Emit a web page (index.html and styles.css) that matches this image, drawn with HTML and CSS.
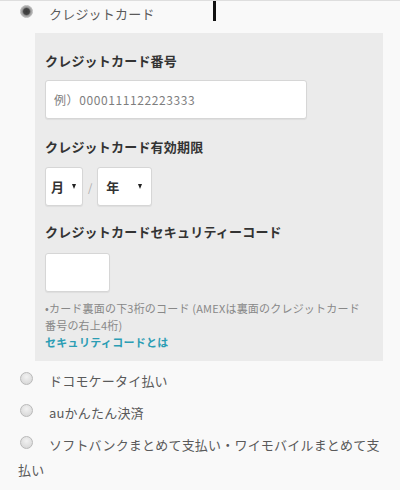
FILE: index.html
```html
<!DOCTYPE html>
<html lang="ja">
<head>
<meta charset="utf-8">
<link rel="stylesheet" href="styles.css">
</head>
<body>
<div class="page">
  <span class="caret"></span>
  <div class="option"><span class="radio checked"></span><span class="label">クレジットカード</span></div>
  <div class="card-box">
    <div class="field-title">クレジットカード番号</div>
    <div class="input wide"><span class="placeholder">例）0000111122223333</span></div>
    <div class="field-title gap">クレジットカード有効期限</div>
    <div class="expiry">
      <div class="select month"><span>月</span><span class="arrow"></span></div>
      <span class="slash">/</span>
      <div class="select year"><span>年</span><span class="arrow"></span></div>
    </div>
    <div class="field-title gap2">クレジットカードセキュリティーコード</div>
    <div class="input small"></div>
    <p class="note">•カード裏面の下3桁のコード (AMEXは裏面のクレジットカード番号の右上4桁)</p>
    <a class="link">セキュリティコードとは</a>
  </div>
  <div class="option"><span class="radio"></span><span class="label">ドコモケータイ払い</span></div>
  <div class="option"><span class="radio"></span><span class="label">auかんたん決済</span></div>
  <div class="option"><span class="radio"></span><span class="label">ソフトバンクまとめて支払い・ワイモバイルまとめて支払い</span></div>
</div>
</body>
</html>
```
FILE: styles.css
```css
html, body {
  margin: 0;
  padding: 0;
  background: #f9f9f9;
}
body {
  font-family: "Noto Sans CJK JP", "Noto Sans", sans-serif;
  color: #555;
}
.page {
  position: relative;
  width: 400px;
  height: 490px;
  border-top: 1px solid #dedede;
  box-sizing: border-box;
  padding: 0 14px 0 18px;
}
.caret {
  position: absolute;
  left: 213px;
  top: 0;
  width: 3px;
  height: 20px;
  background: #111;
}
.option {
  font-size: 13px;
  line-height: 25px;
  letter-spacing: 0.2px;
  color: #5a5a5a;
  margin-bottom: 7px;
}
.radio {
  display: inline-block;
  width: 11px;
  height: 11px;
  border-radius: 50%;
  border: 1px solid #b9b9b9;
  background: radial-gradient(circle at 50% 35%, #f2f2f2 0%, #d2d2d2 100%);
  margin: 0 16px 0 2px;
  vertical-align: 1px;
  box-sizing: content-box;
}
.radio.checked {
  background: radial-gradient(circle, #3a3a3a 0%, #454545 38%, #9a9a9a 55%, #d6d6d6 100%);
}
.card-box {
  margin: 0 0 7px 17px;
  width: 348px;
  box-sizing: border-box;
  background: #ebebeb;
  padding: 18px 10px 10px 10px;
}
.field-title {
  font-size: 13px;
  line-height: 20px;
  font-weight: bold;
  color: #333;
  letter-spacing: 0.2px;
}
.field-title.gap { margin-top: 18px; }
.field-title.gap2 { margin-top: 16px; }
.input {
  background: #fff;
  border: 1px solid #d6d6d6;
  border-radius: 3px;
  box-sizing: border-box;
  height: 39px;
  margin-top: 9px;
  box-shadow: 0 1px 1px rgba(0,0,0,0.06);
}
.input.wide {
  width: 262px;
  display: flex;
  align-items: center;
  padding-left: 8px;
}
.input.small {
  width: 65px;
  margin-top: 11px;
}
.placeholder {
  font-size: 12px;
  color: #7e7e7e;
  letter-spacing: 0.6px;
}
.expiry {
  display: flex;
  align-items: center;
  margin-top: 10px;
}
.select {
  display: flex;
  align-items: center;
  height: 39px;
  background: #fff;
  border: 1px solid #d6d6d6;
  border-radius: 3px;
  box-sizing: border-box;
  font-size: 13px;
  font-weight: bold;
  color: #333;
  padding-left: 5px;
  box-shadow: 0 1px 1px rgba(0,0,0,0.06);
}
.select.month { width: 38px; gap: 8px; }
.select.year { width: 55px; padding-left: 8px; gap: 19px; }
.arrow {
  width: 0;
  height: 0;
  border-left: 2.5px solid transparent;
  border-right: 2.5px solid transparent;
  border-top: 5px solid #222;
}
.slash {
  font-size: 11px;
  color: #aaa;
  margin: 0 5px 0 5px;
}
.note {
  margin: 8px 8px 0 0;
  font-size: 11px;
  line-height: 17px;
  color: #888;
  letter-spacing: 0.2px;
}
.link {
  display: block;
  font-size: 11px;
  line-height: 17px;
  font-weight: bold;
  color: #2b9db4;
  letter-spacing: 0.3px;
}
```
